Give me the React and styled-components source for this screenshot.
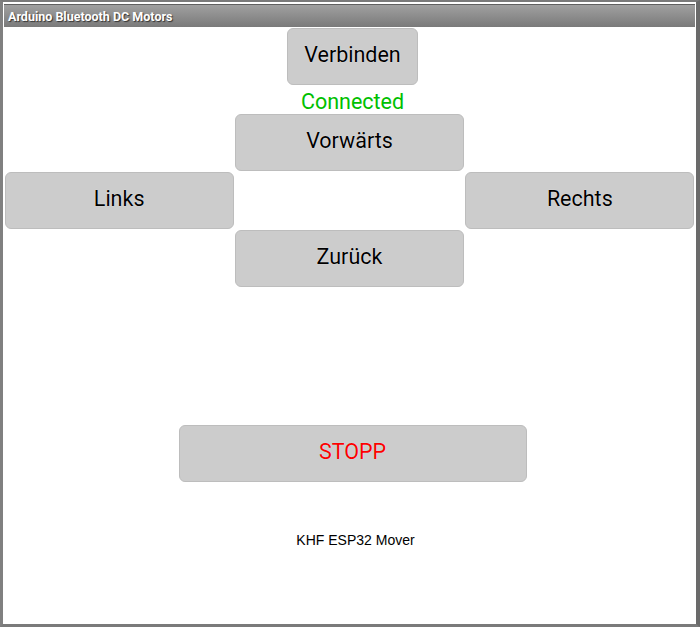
import React from "react";
import styled, { createGlobalStyle } from "styled-components";

const GlobalStyle = createGlobalStyle`
  html, body {
    margin: 0;
    padding: 0;
    background: #ffffff;
  }
  * {
    box-sizing: border-box;
  }
`;

// outer window frame
const Frame = styled.div`
  width: 700px;
  height: 627px;
  display: flex;
  flex-direction: column;
  border-left: 3px solid #808080;
  border-right: 4px solid #6a6a6a;
  border-top: 2px solid #7a7a7a;
  border-bottom: 3px solid #7a7a7a;
  background: #ffffff;
  padding: 2px 1px 1px 1px;
`;

const TitleBar = styled.div`
  height: 23px;
  flex: none;
  display: flex;
  align-items: center;
  padding-left: 4px;
  background: linear-gradient(#a0a0a0, #7a7a7a);
  border-top: 1px solid #606060;
  color: #ffffff;
  font-family: Roboto, "Liberation Sans", sans-serif;
  font-weight: bold;
  font-size: 12.5px;
  text-shadow: 1px 1px 1px #333;
`;

const Content = styled.div`
  flex: 1;
  display: flex;
  flex-direction: column;
  align-items: center;
  padding: 1px 1px 0 1px;
  font-family: Roboto, "Liberation Sans", sans-serif;
`;

const Button = styled.button`
  width: ${(p) => p.w || "100%"};
  height: 57px;
  margin: 0;
  margin-left: ${(p) => p.shift || "0"};
  border: 1px solid #bdbdbd;
  border-radius: 6px;
  background: #cccccc;
  color: ${(p) => p.color || "#000000"};
  font-family: Roboto, "Liberation Sans", sans-serif;
  font-size: 21.5px;
  text-shadow: ${(p) => (p.color ? "0 0 1px #bff" : "0 0 1px #fff")};
  padding: 0 0 4px 0;
  cursor: pointer;
`;

const Status = styled.div`
  height: 29px;
  margin-left: 6px;
  display: flex;
  align-items: flex-end;
  color: #00c000;
  font-size: 21.5px;
  line-height: 24px;
`;

const Pad = styled.div`
  width: 690px;
  display: grid;
  grid-template-columns: repeat(3, 1fr);
  grid-template-rows: repeat(3, 58px);
  column-gap: 1px;
`;

const Cell = styled.div`
  grid-column: ${(p) => p.col};
  grid-row: ${(p) => p.row};
  display: flex;
  align-items: flex-start;
`;

const StopWrap = styled.div`
  margin-top: 137px;
`;

const Footer = styled.div`
  margin-top: 50px;
  margin-left: 12px;
  font-family: "Liberation Sans", Arial, sans-serif;
  font-size: 14px;
  color: #000000;
`;

export default function App() {
  return (
    <>
      <GlobalStyle />
      <Frame>
        <TitleBar>Arduino Bluetooth DC Motors</TitleBar>
        <Content>
          <Button w="131px" shift="6px">
            Verbinden
          </Button>
          <Status>Connected</Status>
          <Pad>
            <Cell col={2} row={1}>
              <Button>Vorwärts</Button>
            </Cell>
            <Cell col={1} row={2}>
              <Button>Links</Button>
            </Cell>
            <Cell col={3} row={2}>
              <Button>Rechts</Button>
            </Cell>
            <Cell col={2} row={3}>
              <Button>Zurück</Button>
            </Cell>
          </Pad>
          <StopWrap>
            <Button w="348px" shift="6px" color="#ff0000">
              STOPP
            </Button>
          </StopWrap>
          <Footer>KHF ESP32 Mover</Footer>
        </Content>
      </Frame>
    </>
  );
}
